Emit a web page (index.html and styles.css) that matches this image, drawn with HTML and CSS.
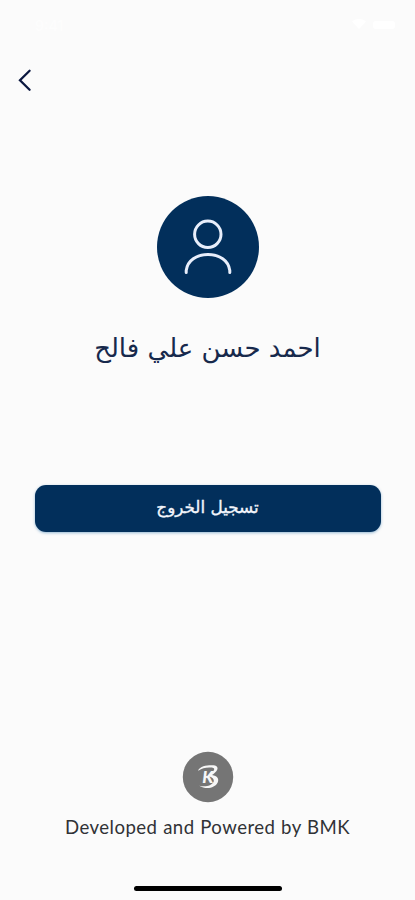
FILE: index.html
```html
<!DOCTYPE html>
<html lang="ar">
<head>
  <meta charset="UTF-8" />
  <meta name="viewport" content="width=device-width, initial-scale=1.0"/>
  <title>Profile</title>
  <link rel="stylesheet" href="styles.css">
</head>
<body>

  <div class="status-bar">
    <span class="time">9:41</span>
    <svg width="46" height="12" viewBox="0 0 46 12" fill="#fff">
      <path d="M0 3.500a10 10 0 0 1 14 0L7 11z"/>
      <rect x="21" y="3" width="22" height="8" rx="3"/>
    </svg>
  </div>

  <header>
    <button class="back-btn" aria-label="Back">
      <svg width="16" height="24" viewBox="0 0 16 24" fill="none" stroke="#0b1840" stroke-width="2.3" stroke-linecap="round" stroke-linejoin="miter">
        <path d="M12.600 2.800 3 12.300l9.600 9.400"/>
      </svg>
    </button>
  </header>

  <main>
    <div class="avatar">
      <svg width="102" height="102" viewBox="0 0 102 102" fill="none" stroke="#e8eefb" stroke-width="3" stroke-linecap="round">
        <circle cx="50.800" cy="38.300" r="13.200"/>
        <path d="M29.200 76.500v-2C30.500 64.500 39.500 58.600 51 58.600s20.500 5.900 21.800 15.900v2"/>
      </svg>
    </div>

    <h1 class="user-name" dir="rtl">احمد حسن علي فالح</h1>

    <button class="logout-btn" dir="rtl">تسجيل الخروج</button>
  </main>

  <footer>
    <svg class="brand-logo" width="52" height="52" viewBox="0 0 52 52">
      <circle cx="26" cy="26" r="25.200" fill="#757575"/>
      <path d="M16 19.500C18.500 15 25 14 31.500 14.300c4.500.5 5 3.200 2.800 6-1.300 1.600-2.600 2.700-4.300 3.700 5.500.8 7.300 4 5.700 7.600-2.800 6-12.300 7.100-18.400 3.200 6 1.300 12.200.2 14.200-3.700 1.200-2.800-.9-4.900-4.600-5.700v-1.900c2.700-1.300 4.600-3 5.200-4.800.6-2-1.400-2.300-4.200-2.300-4.500-.1-8.200.9-11.200 3.100z" fill="#f7f7f7"/>
      <text class="brand-letter" x="20.300" y="32">K</text>
    </svg>
    <p dir="ltr">Developed and Powered by BMK</p>
    <div class="home-indicator"></div>
  </footer>

</body>
</html>
```
FILE: styles.css
```css
* {
  margin: 0;
  padding: 0;
  box-sizing: border-box;
}

body {
  font-family: "DejaVu Sans", sans-serif;
  background-color: #fbfbfb;
  color: #303236;
  height: 900px;
  display: flex;
  flex-direction: column;
  overflow: hidden;
}

svg {
  display: block;
}

button {
  border: none;
  background: none;
}

.status-bar {
  height: 50px;
  padding: 18px 17px 0 35px;
  display: flex;
  justify-content: space-between;
}

.time {
  font: 600 14px/16px "Inter", sans-serif;
  color: #fdfdfd;
}

header {
  height: 60px;
  padding: 18px 17px;
}

main {
  flex: 1;
  display: flex;
  flex-direction: column;
  align-items: center;
  padding-top: 86px;
}

.avatar {
  width: 102px;
  height: 102px;
  border-radius: 50%;
  background-color: #022f5b;
}

.user-name {
  margin-top: 25px;
  height: 50px;
  line-height: 50px;
  font-size: 26px;
  font-weight: 400;
  color: #17294c;
  white-space: nowrap;
}

.logout-btn {
  margin-top: 112px;
  width: 346px;
  height: 47px;
  border-radius: 11px;
  background-color: #022f5b;
  box-shadow: 0 1px 3px rgba(25, 105, 165, 0.45);
  color: #f3f5fb;
  font-family: "DejaVu Sans", sans-serif;
  font-size: 16.8px;
  line-height: 20px;
  padding-bottom: 3px;
  -webkit-text-stroke: 0.35px #f3f5fb;
}

footer {
  height: 149px;
  display: flex;
  flex-direction: column;
  align-items: center;
}

.brand-letter {
  font: italic 900 17px "Lato", sans-serif;
  fill: #f7f7f7;
}

footer p {
  margin-top: 12px;
  font: 400 18.6px/24px "Lato", sans-serif;
  letter-spacing: 0.45px;
  word-spacing: 0.5px;
  white-space: nowrap;
}

.home-indicator {
  width: 148px;
  height: 5px;
  margin-top: 47px;
  border-radius: 3px;
  background-color: #000;
}
```
